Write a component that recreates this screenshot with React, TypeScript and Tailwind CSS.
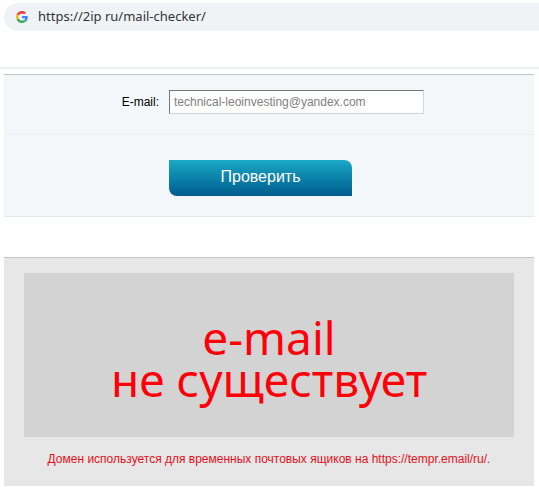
import { useState } from "react"

const GoogleIcon = () => (
    <svg viewBox="0 0 48 48" className="h-3 w-3 shrink-0" aria-hidden="true">
        <path fill="#EA4335" d="M24 9.5c3.54 0 6.71 1.22 9.21 3.6l6.85-6.85C35.9 2.38 30.47 0 24 0 14.62 0 6.51 5.38 2.56 13.22l7.98 6.19C12.43 13.72 17.74 9.5 24 9.5z" />
        <path fill="#4285F4" d="M46.98 24.55c0-1.57-.15-3.09-.38-4.55H24v9.02h12.94c-.58 2.96-2.26 5.48-4.78 7.18l7.73 6c4.51-4.18 7.09-10.36 7.09-17.65z" />
        <path fill="#FBBC05" d="M10.53 28.59c-.48-1.45-.76-2.99-.76-4.59s.27-3.14.76-4.59l-7.98-6.19C.92 16.46 0 20.12 0 24c0 3.88.92 7.54 2.56 10.78l7.97-6.19z" />
        <path fill="#34A853" d="M24 48c6.48 0 11.93-2.13 15.89-5.81l-7.73-6c-2.15 1.45-4.92 2.3-8.16 2.3-6.26 0-11.57-4.22-13.47-9.91l-7.98 6.19C6.51 42.62 14.62 48 24 48z" />
    </svg>
)

const AddressBar = () => (
    <header className="border-b-2 border-[#ebeeee] pt-[3px] pb-9 pl-1">
        <div className="flex h-7 items-center gap-2.5 rounded-l-full bg-[#f0f3f5] pl-3">
            <GoogleIcon />
            <span className="font-['Noto_Sans','Open_Sans',sans-serif] text-[13px] text-[#303438]">
                https://2ip ru/mail-checker/
            </span>
        </div>
    </header>
)

const CheckForm = () => {
    const [email, setEmail] = useState("technical-leoinvesting@yandex.com")

    return (
        <form
            className="border-t border-b border-t-[#bccac7] border-b-[#e4eae9] bg-[#f3f7fa]"
            onSubmit={(e) => e.preventDefault()}
        >
            <div className="flex items-center gap-2.5 border-b border-[#e9eef0] pt-[15px] pb-5">
                <label htmlFor="email" className="w-[155px] shrink-0 text-right text-xs text-black">
                    E-mail:
                </label>
                <input
                    id="email"
                    name="email"
                    type="text"
                    value={email}
                    onChange={(e) => setEmail(e.target.value)}
                    className="h-6 w-[255px] border border-t-[#737a7b] border-r-[#d2d8d8] border-b-[#cdd5d4] border-l-[#737a7b] bg-white px-1 text-xs text-[#808080]"
                />
            </div>
            <div className="pt-[25px] pb-5 pl-[165px]">
                <button
                    type="submit"
                    className="h-9 w-[183px] rounded-tr-lg rounded-bl-lg bg-gradient-to-b from-[#1ba9c6] to-[#025c8d] pb-0.5 text-base text-white"
                >
                    Проверить
                </button>
            </div>
        </form>
    )
}

const Result = () => (
    <section className="border-t border-[#c4c6c5] bg-[#e7e7e7] px-5 pt-[15px] pb-[19px] text-center">
        <div className="bg-[#d3d3d3] pt-[43px] pb-[37px]">
            <h1 className="font-['Noto_Sans','Open_Sans',sans-serif] text-[46px] leading-[42px] text-[#ff0008]">
                e-mail
                <br />
                не существует
            </h1>
        </div>
        <p className="mt-3.5 text-xs leading-4 text-[#e60f20]">
            Домен используется для временных почтовых ящиков на https://tempr.email/ru/.
        </p>
    </section>
)

export default function App() {
    return (
        <div className="min-h-screen bg-white font-['Liberation_Sans',Arial,sans-serif]">
            <AddressBar />
            <main className="flex flex-col gap-10 pt-[5px] pr-[5px] pl-1">
                <CheckForm />
                <Result />
            </main>
        </div>
    )
}
